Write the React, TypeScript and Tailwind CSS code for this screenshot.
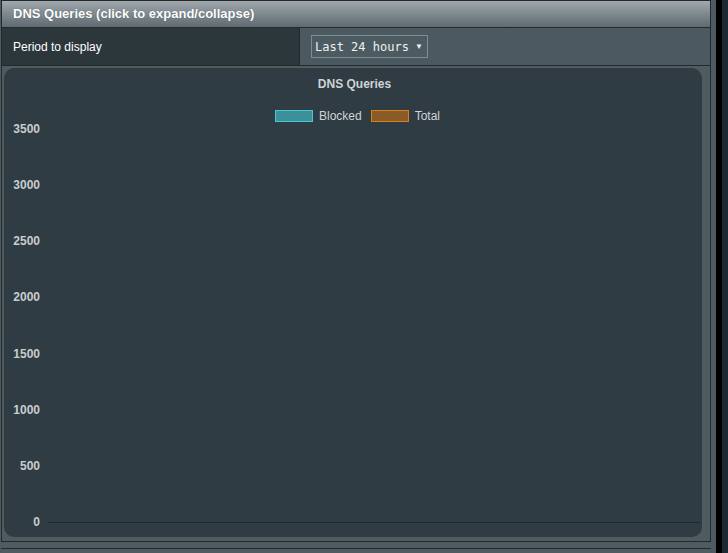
import React from 'react';

const ticks = [3500, 3000, 2500, 2000, 1500, 1000, 500, 0];

const LegendItem = ({ label, fill, border }: { label: string; fill: string; border: string }): JSX.Element => (
  <div className="flex items-center">
    <span className={`block h-[12px] w-[38px] border ${fill} ${border}`} />
    <span className="ml-[6px] text-[12px] leading-[14px] text-[#cfd3d5]">{label}</span>
  </div>
);

const ChartPanel = (): JSX.Element => (
  <div className="flex h-[469px] w-[698px] flex-col rounded-[10px] bg-[#2f3c43] pt-[9px]">
    <div className="pl-[3px] text-center text-[12px] font-bold leading-[14px] text-[#cfd3d5]">DNS Queries</div>
    <div className="mt-[18px] flex h-[13px] justify-center gap-[9px] pl-[9px]">
      <LegendItem label="Blocked" fill="bg-[#3a9199]" border="border-[#4fc6cf]" />
      <LegendItem label="Total" fill="bg-[#8a5a27]" border="border-[#d67f1d]" />
    </div>
    <div className="flex h-[407px] flex-col justify-between">
      {ticks.map(t => (
        <div key={t} className="flex h-[14px] items-center">
          <span className="w-[36px] text-right text-[12px] font-bold leading-[14px] text-[#c9cdcf]">{t}</span>
          <div className={`ml-[8px] mr-[2px] mt-[2px] h-px flex-1 ${t === 0 ? 'bg-[#1d272c]' : ''}`} />
        </div>
      ))}
    </div>
  </div>
);

const App = (): JSX.Element => {
  return (
    <div
      className="flex h-[553px] w-[728px] overflow-hidden bg-[#1c2a33]"
      style={{ fontFamily: '"Liberation Sans", Arial, sans-serif' }}
    >
      <div className="w-[716px] bg-[#4e5c62] pl-[1px] pr-[5px]">
        <div className="border border-[#26292b]">
          <div className="flex h-[27px] items-center border-b border-[#26292b] bg-gradient-to-b from-[#9ea8ad] to-[#5f6b71] pl-[11px]">
            <span className="text-[13px] font-bold text-white [text-shadow:0_0_1px_rgba(0,0,0,0.4)]">
              DNS Queries (click to expand/collapse)
            </span>
          </div>
          <div className="flex h-[38px] border-b border-[#26292b]">
            <div className="flex w-[298px] items-center border-r border-[#26292b] bg-[#2c373c] pl-[11px]">
              <span className="text-[12px] text-white">Period to display</span>
            </div>
            <div className="flex flex-1 items-center bg-[#4a5a60] pl-[11px]">
              <div className="flex h-[23px] w-[117px] items-center border border-[#808c91] bg-[#4c5b61] pl-[3px]">
                <span
                  className="text-[12px] text-[#f0f0f0]"
                  style={{ fontFamily: '"DejaVu Sans Mono", "Liberation Mono", monospace' }}
                >
                  Last 24 hours
                </span>
                <span className="ml-[6px] text-[8px] text-[#f0f0f0]">▼</span>
              </div>
            </div>
          </div>
          <div className="bg-[#4e5c62] pb-[4px] pl-[2px] pt-[2px]">
            <ChartPanel />
          </div>
        </div>
        <div className="mt-[6px] h-[10px] border-t border-[#26292b] bg-[#4e5c62]" />
      </div>
      <div className="w-[6px] bg-black" />
      <div className="flex-1 bg-[#1c2a33]" />
    </div>
  );
};

export default App;
